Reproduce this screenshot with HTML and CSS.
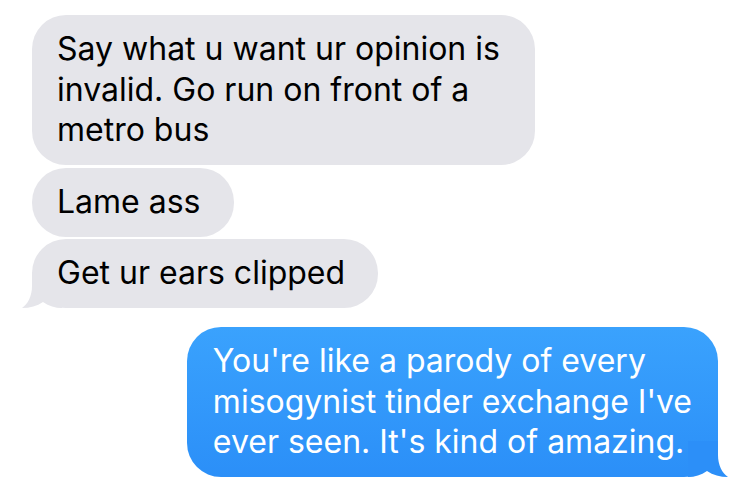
FILE: index.html
```html
<!DOCTYPE html>
<html lang="en">
<head>
<meta charset="utf-8">
<title>Messages</title>
<link rel="stylesheet" href="styles.css">
</head>
<body>
<main class="thread">
  <div class="bubble received b-wide">Say what u want ur opinion is<br>invalid. Go run on front of a<br>metro bus</div>
  <div class="bubble received">Lame ass</div>
  <div class="bubble received tail">Get ur ears clipped<svg class="tail-shape" width="40" height="36" viewBox="0 0 40 36" aria-hidden="true"><path d="M10 0 L10 14 C10 24 6 32 0 36 C8 36 15 34 21 30 C27 34 33 36 40 36 L40 0 Z"/></svg></div>
  <div class="bubble sent tail">You're like a parody of every<br>misogynist tinder exchange I've<br>ever seen. It's kind of amazing.<svg class="tail-shape" width="40" height="36" viewBox="0 0 40 36" aria-hidden="true"><path d="M30 0 L30 14 C30 24 34 32 40 36 C32 36 25 34 19 30 C13 34 7 36 0 36 L0 0 Z"/></svg></div>
</main>
</body>
</html>
```

FILE: styles.css
```css
html, body {
  margin: 0;
  padding: 0;
  background: #ffffff;
}

body {
  width: 750px;
  height: 484px;
  overflow: hidden;
  font-family: "Inter", "Noto Sans", sans-serif;
}

.thread {
  display: flex;
  flex-direction: column;
  align-items: flex-start;
  padding: 15px 32px 0 32px;
}

.bubble {
  position: relative;
  isolation: isolate;
  font-size: 32px;
  line-height: 40.5px;
  padding: 14px 33px 14.5px 25px;
  border-radius: 34px;
  white-space: nowrap;
}

.received {
  background: #e5e5ea;
  color: #000000;
  margin-top: 2.5px;
}

.received:first-child {
  margin-top: 0;
}

.b-wide {
  padding-right: 35px;
}

.sent {
  align-self: flex-end;
  margin-top: 19px;
  padding: 14px 26px 14.5px 26px;
  color: #ffffff;
  background: linear-gradient(to bottom, #3aa2fd, #2b8ff8);
}

.tail-shape {
  position: absolute;
  bottom: 0;
  z-index: -1;
  display: block;
}

.received .tail-shape {
  left: -10px;
  fill: #e5e5ea;
}

.sent .tail-shape {
  right: -10px;
  fill: #2c8ff8;
}
```
